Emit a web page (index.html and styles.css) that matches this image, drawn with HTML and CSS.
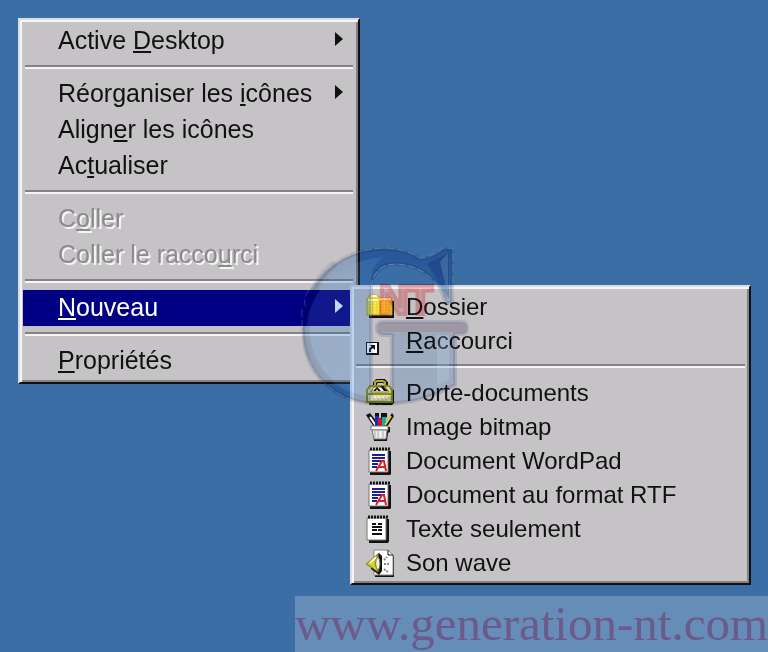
FILE: index.html
```html
<!DOCTYPE html>
<html lang="fr">
<head>
    <meta charset="UTF-8">
    <meta name="viewport" content="width=device-width, initial-scale=1.0">
    <title>Menu Nouveau</title>
    <link rel="stylesheet" href="styles.css">
</head>

<body>
    <main class="desktop">
        <ul class="menu">
            <li><button type="button" class="item"><span>Active <u>D</u>esktop</span><svg class="arrow" viewBox="0 0 8 14"><path d="M0 0 L8 7 L0 14Z"/></svg></button></li>
            <li><hr></li>
            <li><button type="button" class="item"><span>Réorganiser les <u>i</u>cônes</span><svg class="arrow" viewBox="0 0 8 14"><path d="M0 0 L8 7 L0 14Z"/></svg></button></li>
            <li><button type="button" class="item"><span>Align<u>e</u>r les icônes</span></button></li>
            <li><button type="button" class="item"><span>Ac<u>t</u>ualiser</span></button></li>
            <li><hr></li>
            <li><button type="button" class="item" disabled><span>C<u>o</u>ller</span></button></li>
            <li><button type="button" class="item" disabled><span>Coller le racco<u>u</u>rci</span></button></li>
            <li><hr></li>
            <li class="open">
                <button type="button" class="item active"><span><u>N</u>ouveau</span><svg class="arrow" viewBox="0 0 8 14"><path d="M0 0 L8 7 L0 14Z"/></svg></button>
                <ul class="menu submenu">
                    <li><button type="button" class="item">
                        <svg class="icon" viewBox="0 0 28 28">
                            <path d="M3 25h25V8h-3v14H3z" fill="#111"/>
                            <path d="M1 22V6l3-4h7l3 3h11l1 2v15z" fill="#f0d832" stroke="#a8963c"/>
                            <path d="M2 7h10M14 6h11M5 3h6" stroke="#fffbd0" stroke-width="2"/>
                            <path d="M5 9v12M9 9v12M13 9v12M17 9v12M21 9v12" stroke="#fff48f" stroke-width="1" stroke-dasharray="2 1"/>
                            <path d="M14 8v14M24 8v14" stroke="#d7ae24" stroke-width="2"/>
                        </svg>
                        <span><u>D</u>ossier</span></button></li>
                    <li><button type="button" class="item">
                        <svg class="icon" viewBox="0 0 28 28">
                            <path d="M0 15h13v13H0z" fill="#111"/>
                            <path d="M1 16h10v10H1z" fill="#fff"/>
                            <path d="M4 25v-3l3-2" fill="none" stroke="#111" stroke-width="2"/>
                            <path d="M4 18h5v5z" fill="#111"/>
                        </svg>
                        <span><u>R</u>accourci</span></button></li>
                    <li><hr></li>
                    <li><button type="button" class="item">
                        <svg class="icon" viewBox="0 0 28 28">
                            <path d="M3 11h25v13l-2 2H3z" fill="#111"/>
                            <path d="M9 8V4l2-2h7l2 2v5" fill="none" stroke="#111" stroke-width="4"/>
                            <path d="M9 8V3l2-1h6l2 1v5" fill="none" stroke="#b3ae22" stroke-width="2"/>
                            <path d="M1 23V11l3-4h19l3 4v12z" fill="#dedaa0" stroke="#8f8a1c" stroke-width="2"/>
                            <path d="M5 13l3-5h11l4 5z" fill="#fff" stroke="#77731a"/>
                            <path d="M7 12l4-4 4 4h-3l-1-2-1 2zM14 7h3l5 5h-4z" fill="#111"/>
                            <path d="M2 15h23" stroke="#8f8a1c" stroke-width="2"/>
                            <path d="M4 18h20M5 20h19" stroke="#fff" stroke-dasharray="2 2"/>
                        </svg>
                        <span>Porte-documents</span></button></li>
                    <li><button type="button" class="item">
                        <svg class="icon" viewBox="0 0 28 28">
                            <path d="M0 2l4-2 7 9v5H8z" fill="#111"/>
                            <path d="M4 4l6 9" stroke="#fff" stroke-width="2"/>
                            <path d="M9 1h4v12H9z" fill="#1a26b8"/>
                            <path d="M12 5h4v9h-4z" fill="#d01818"/>
                            <path d="M9 0h4v3H9zM15 0h6v4l-2 2h-4z" fill="#111"/>
                            <path d="M16 4h4v9h-4z" fill="#15a9b3"/>
                            <path d="M26 0l2 3-7 11-3-2z" fill="#111"/>
                            <path d="M25 3l-6 9" stroke="#e4dc25" stroke-width="2"/>
                            <path d="M6 14h18v5l-2 1-1 8H8z" fill="#111"/>
                            <path d="M5 13h17v4H5z" fill="#fff" stroke="#777"/>
                            <path d="M6 17h15l-1 9H8z" fill="#eee" stroke="#777"/>
                            <path d="M9 18v7M12 18v7M17 18v7" stroke="#aaa"/>
                        </svg>
                        <span>Image bitmap</span></button></li>
                    <li><button type="button" class="item">
                        <svg class="icon" viewBox="0 0 28 28">
                            <path d="M5 4h20v23l-1 1H4v-3z" fill="#111"/>
                            <path d="M3 3h19v22H3z" fill="#fff" stroke="#777"/>
                            <path d="M4 2h20" stroke="#111" stroke-width="3" stroke-dasharray="2 1"/>
                            <path d="M6 8h13M6 11h13M6 14h9M6 17h6M6 20h5" stroke="#20208c" stroke-width="2"/>
                            <path d="M10 24l6-10h2l2 10M13 20h7" fill="none" stroke="#e21b25" stroke-width="2"/>
                        </svg>
                        <span>Document WordPad</span></button></li>
                    <li><button type="button" class="item">
                        <svg class="icon" viewBox="0 0 28 28">
                            <path d="M5 4h20v23l-1 1H4v-3z" fill="#111"/>
                            <path d="M3 3h19v22H3z" fill="#fff" stroke="#777"/>
                            <path d="M4 2h20" stroke="#111" stroke-width="3" stroke-dasharray="2 1"/>
                            <path d="M6 8h13M6 11h13M6 14h9M6 17h6M6 20h5" stroke="#20208c" stroke-width="2"/>
                            <path d="M10 24l6-10h2l2 10M13 20h7" fill="none" stroke="#e21b25" stroke-width="2"/>
                        </svg>
                        <span>Document au format RTF</span></button></li>
                    <li><button type="button" class="item">
                        <svg class="icon" viewBox="0 0 28 28">
                            <path d="M4 4h19v22l-1 2H3v-3z" fill="#111"/>
                            <path d="M1 3h19v22H1z" fill="#fff" stroke="#777"/>
                            <path d="M2 2h20" stroke="#111" stroke-width="3" stroke-dasharray="2 1"/>
                            <path d="M6 9h4M12 9h4M6 12h10M6 15h5M12 15h4M6 19h10" stroke="#111" stroke-width="2"/>
                        </svg>
                        <span>Texte seulement</span></button></li>
                    <li><button type="button" class="item">
                        <svg class="icon" viewBox="0 0 28 28">
                            <path d="M9 28h19V7l-2-2v21H9z" fill="#111"/>
                            <path d="M8 1h14l5 5v20H8z" fill="#fff" stroke="#888"/>
                            <path d="M22 1v5h5" fill="none" stroke="#111"/>
                            <path d="M18 11l3-3M18 15h5M18 20l4 3" stroke="#888" stroke-width="2" stroke-dasharray="2 1"/>
                            <path d="M5 11L13 4l3 3v15l-3 4-8-6z" fill="#111"/>
                            <path d="M0 15l4-3 8-7v18l-7-5z" fill="#d5d02a" stroke="#77731a"/>
                            <path d="M4 14l6-6" fill="none" stroke="#fffbc0" stroke-width="2"/>
                            <path d="M12 7q-5 7 0 15q4-7 0-15z" fill="#eee" stroke="#77731a"/>
                        </svg>
                        <span>Son wave</span></button></li>
                </ul>
            </li>
            <li><hr></li>
            <li><button type="button" class="item"><span><u>P</u>ropriétés</span></button></li>
        </ul>

        <svg class="logo tint" viewBox="0 0 168 162" aria-hidden="true">
            <defs>
                <linearGradient id="glass" x1="0" y1="0" x2="0" y2="1">
                    <stop offset="0" stop-color="#b4cbf0"/>
                    <stop offset=".3" stop-color="#c8dcf0"/>
                    <stop offset="1" stop-color="#cbe2fb"/>
                </linearGradient>
            </defs>
            <path d="M83 2 C99 2 112 7 119 12 Q131 12 143 2 L151 2 V56 H145 C139 32 118 16 92 17 C78 18 70 28 70 44 V153 Q81 154 91 150 V88 H82 Q76 87 76 81 Q76 75 82 75 H160 Q166 75 166 81 Q166 87 160 87 H154 V138 C134 149 111 157 81 157 C32 157 2 125 2 82 C2 37 36 2 83 2Z"
                  fill="url(#glass)" stroke="#49446f" stroke-opacity=".16" stroke-width="4" stroke-linejoin="round"/>
            <path d="M32 18 C14 33 5 54 5 82 C5 117 29 146 65 153" fill="none" stroke="#33416f" stroke-opacity=".1" stroke-width="8" stroke-linecap="round"/>
            <path d="M126 17 L148 5 V52Z" fill="#073e91" fill-opacity=".25"/>
            <path d="M80 81 H161" stroke="#cdc6d2" stroke-width="8" stroke-linecap="round"/>
            <text class="logo-text" x="105" y="67" text-anchor="middle">NT</text>
        </svg>
        <svg class="logo" viewBox="0 0 168 162" aria-hidden="true">
            <path d="M5 60 C-4 45 34 1 83 1 C98 1 109 5 119 11 Q132 9 142 1 H152 V48M1 62 V98M8 112 C22 142 47 158 81 158" fill="none" stroke="#e6eef8" stroke-opacity=".2" stroke-dasharray="8 3"/>
            <path d="M70 70 V41 C71 26 80 17 95 17 C120 18 138 33 145 55" fill="none" stroke="#d6e5f7" stroke-opacity=".3" stroke-dasharray="7 3"/>
            <path d="M6 82 C6 50 32 14 83 10 C68 18 70 36 70 50 V150 C32 148 8 118 6 82Z" fill="#8fc4ff" fill-opacity=".12"/>
            <path d="M139 15 L147 6 V48Z" fill="#8dbce8" fill-opacity=".25"/>
            <path d="M136 88 H148 V132 L136 139Z" fill="#c9e4fa" fill-opacity=".2"/>
        </svg>

        <a class="site" href="#">www.generation-nt.com</a>
    </main>
</body>
</html>
```

FILE: styles.css
```css
* {
    box-sizing: border-box;
}

body {
    margin: 0;
    background-color: #3a6ea5;
    font-family: "Liberation Sans", Arial, sans-serif;
}

.desktop {
    position: relative;
    display: flex;
    align-items: flex-start;
    min-height: 100vh;
    padding: 18px;
    overflow: hidden;
}

.menu {
    min-width: 342px;
    margin: 0;
    padding: 3px;
    list-style: none;
    background-color: #c6c3c6;
    border: 2px solid;
    border-color: #dedce0 #111 #111 #dedce0;
    box-shadow: inset 2px 2px #f6f5f6, inset -2px -2px #848284;
}

.item {
    display: flex;
    align-items: center;
    justify-content: space-between;
    width: 100%;
    height: 36px;
    padding: 0 12px 0 35px;
    border: none;
    background: none;
    color: #111;
    font-family: inherit;
    font-size: 25px;
    line-height: 34px;
    text-align: left;
    white-space: nowrap;
}

.item span {
    padding-bottom: 2px;
}

.item u {
    text-decoration-thickness: 2px;
    text-underline-offset: 2px;
    text-decoration-skip-ink: none;
}

.item:disabled {
    color: #8c8a8c;
    text-shadow: 2px 2px #f6f5f6;
}

.item.active {
    background-color: #000084;
    color: #fff;
}

.arrow {
    width: 8px;
    height: 14px;
    margin-bottom: 4px;
    fill: currentColor;
}

hr {
    margin: 6px 2px 7px;
    border: none;
    border-top: 2px solid #848284;
    border-bottom: 2px solid #f6f5f6;
}

.open {
    position: relative;
}

.submenu {
    position: absolute;
    top: -5px;
    left: calc(100% - 5px);
    min-width: 401px;
}

.submenu .item {
    justify-content: flex-start;
    gap: 12px;
    height: 34px;
    padding: 0 12px 0 11px;
    font-size: 24px;
}

.submenu .item span {
    padding-bottom: 0;
}

.submenu hr {
    margin: 6px 1px 8px;
}

.icon {
    flex: none;
    width: 28px;
    height: 28px;
}

/* watermarks lie over the menus */
.logo {
    position: absolute;
    top: 247px;
    left: 301px;
    width: 168px;
    height: 162px;
    pointer-events: none;
}

.tint {
    mix-blend-mode: multiply;
}

.logo-text {
    fill: #ffd8da;
    stroke: #ffb4b8;
    stroke-width: 4px;
    font-size: 40px;
    font-weight: bold;
}

.site {
    position: absolute;
    right: 0;
    bottom: 0;
    background-color: rgba(255, 255, 255, 0.22);
    color: #6b5a8a;
    font-family: "Liberation Serif", "Times New Roman", serif;
    font-size: 49px;
    line-height: 56px;
    text-decoration: none;
}
```
